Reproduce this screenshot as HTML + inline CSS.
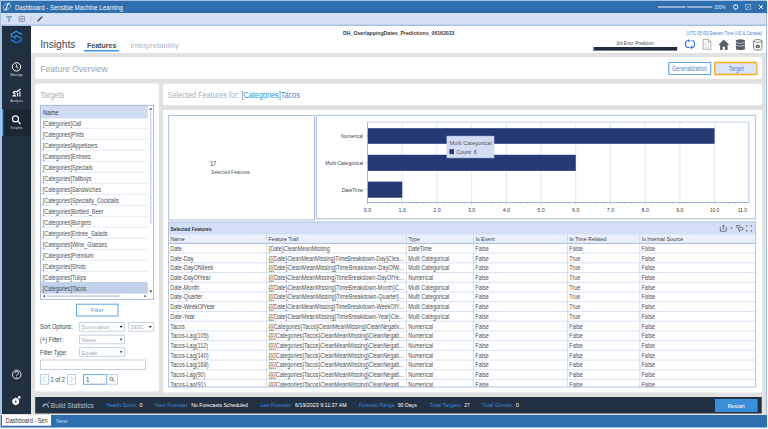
<!DOCTYPE html>
<html><head><meta charset="utf-8">
<style>
*{margin:0;padding:0}
html,body{width:768px;height:429px;overflow:hidden;background:#fff}
svg{display:block;font-family:"Liberation Sans",sans-serif}
</style></head><body>
<svg width="768" height="429" viewBox="0 0 768 429">
<rect x="0" y="0" width="768" height="429" fill="#ffffff" />
<rect x="0" y="0" width="767" height="428" fill="#a8c2e4" />
<rect x="1" y="1" width="766" height="12" fill="#2f6fb0" />
<text x="14.9" y="9.5" font-size="7.2" fill="#f4f7fb" textLength="108.00" lengthAdjust="spacingAndGlyphs">Dashboard - Sensible Machine Learning</text>
<ellipse cx="7" cy="6.7" rx="3.9" ry="3.1" stroke="#d6e2f0" stroke-width="0.55" fill="none" transform="rotate(-35 7 6.7)"/>
<path d="M9.8,3.2 C8,2.9 7.4,4.6 7.1,6.4 C6.8,8.3 6.3,10.3 4.2,10" stroke="#f4f7fb" stroke-width="1.05" fill="none"/>
<rect x="658" y="6.3" width="27.6" height="1.4" fill="#b9cde6" />
<rect x="687.2" y="6.3" width="25" height="1.4" fill="#b9cde6" />
<text x="714.2" y="9.4" font-size="5.6" fill="#e8eef8" textLength="11.10" lengthAdjust="spacingAndGlyphs">100%</text>
<rect x="733.7" y="5" width="4" height="3.9" fill="none" stroke="#eef3fa" stroke-width="0.9" rx="1"/>
<rect x="735.2" y="4" width="1" height="1" fill="#eef3fa" />
<rect x="735.2" y="8.9" width="1" height="1" fill="#eef3fa" />
<rect x="745.4" y="4.5" width="5.4" height="5.1" fill="none" stroke="#b9cbe4" stroke-width="0.6"/>
<line x1="746.6" y1="8.6" x2="749.3" y2="5.8" stroke="#d5e1f0" stroke-width="0.8"/>
<line x1="758.9" y1="4.9" x2="763" y2="9.1" stroke="#f0f4fa" stroke-width="1"/>
<line x1="763" y1="4.9" x2="758.9" y2="9.1" stroke="#f0f4fa" stroke-width="1"/>
<rect x="1" y="13" width="766" height="12" fill="#d3e0f6" />
<rect x="1" y="24.6" width="766" height="1" fill="#a8bde2" />
<rect x="6.2" y="16.3" width="5.8" height="0.9" fill="#6f7782" />
<path d="M6.8,17.6 L11.4,17.6 L9.1,20.2 Z" fill="#56aee8"/>
<rect x="8.5" y="19.6" width="1.2" height="2.2" fill="#6f7782" />
<rect x="19.2" y="16.3" width="5.3" height="5.3" fill="none" stroke="#7b828c" stroke-width="0.7" rx="0.6"/>
<line x1="21.85" y1="16.3" x2="21.85" y2="21.6" stroke="#7b828c" stroke-width="0.6"/>
<line x1="19.2" y1="18.95" x2="24.5" y2="18.95" stroke="#7b828c" stroke-width="0.6"/>
<line x1="19.6" y1="21.2" x2="24.1" y2="16.7" stroke="#9aa1aa" stroke-width="0.4"/>
<rect x="30.2" y="16.3" width="1.3" height="5.5" fill="#b7cbea" />
<line x1="37.6" y1="21.3" x2="41.8" y2="17.1" stroke="#4a525c" stroke-width="1.5"/>
<circle cx="42.2" cy="16.7" r="0.85" fill="#4aa3e6"/>
<rect x="1" y="26" width="1" height="388" fill="#a8c2e4" />
<rect x="2" y="26" width="29" height="388" fill="#213040" />
<rect x="2" y="109" width="29" height="27" fill="#1a2632" />
<rect x="2" y="109" width="1.3" height="27" fill="#4da0e6" />
<defs><linearGradient id="lg" x1="0" y1="0" x2="0" y2="1"><stop offset="0" stop-color="#22a3ee"/><stop offset="1" stop-color="#1b6fe4"/></linearGradient></defs>
<path d="M22.2,34.6 L16.2,31.3 L11.6,34 Q10.8,35.1 11.6,36.2 L16.2,38.8 M13.9,37.2 L16.2,35.6 L21,38.3 Q21.9,39.5 21,40.8 L16.2,42.9 L10.6,39.6" stroke="url(#lg)" stroke-width="1.3" fill="none" stroke-linejoin="round"/>
<circle cx="16.5" cy="66.9" r="4.2" stroke="#ffffff" stroke-width="1" fill="none"/>
<path d="M16.4,64.4 L16.4,67 L18.4,68.6" stroke="#ffffff" stroke-width="0.9" fill="none"/>
<text x="16.6" y="75.9" font-size="4.1" fill="#c9d0d8" text-anchor="middle" textLength="12.90" lengthAdjust="spacingAndGlyphs">Manage</text>
<path d="M17.6,96.6 L17.6,92.8 M19.9,96.6 L19.9,91.2 M12.8,92.8 Q14.6,90.3 16.6,91.8 L20.6,89" stroke="#ffffff" stroke-width="1.1" fill="none"/>
<path d="M12.4,96.6 Q12.4,94.4 14.3,94.4 Q16.2,94.4 16.2,96.6 Z" fill="#ffffff"/>
<circle cx="14.4" cy="93.3" r="1.1" fill="#ffffff"/>
<text x="16.6" y="102.1" font-size="4.1" fill="#c9d0d8" text-anchor="middle" textLength="12.50" lengthAdjust="spacingAndGlyphs">Analysis</text>
<circle cx="15.5" cy="118.9" r="3" stroke="#ffffff" stroke-width="1.1" fill="none"/>
<line x1="17.7" y1="121.1" x2="20.6" y2="124" stroke="#ffffff" stroke-width="1.3"/>
<text x="16.6" y="128.9" font-size="4.1" fill="#c9d0d8" text-anchor="middle" textLength="12.00" lengthAdjust="spacingAndGlyphs">Insights</text>
<circle cx="16.7" cy="374.5" r="4.3" stroke="#ffffff" stroke-width="0.85" fill="none"/>
<path d="M15.1,373.2 Q15.1,371.5 16.8,371.5 Q18.4,371.5 18.4,373 Q18.4,374.1 17.3,374.6 Q16.7,374.9 16.7,375.8" stroke="#ffffff" stroke-width="0.8" fill="none"/>
<circle cx="16.7" cy="377.2" r="0.5" fill="#ffffff"/>
<polygon points="15.7,398.1 18.6,399.8 18.6,403.2 15.7,404.9 12.8,403.2 12.8,399.8" fill="#ffffff" stroke="#ffffff" stroke-width="0.9" stroke-linejoin="round"/>
<circle cx="15.7" cy="401.5" r="0.9" fill="#213040"/>
<circle cx="19.2" cy="397.4" r="1.35" fill="#ffffff"/>
<rect x="31" y="26" width="735" height="27" fill="#ffffff" />
<text x="40.2" y="47.8" font-size="11.3" fill="#3d4654" textLength="35.20" lengthAdjust="spacingAndGlyphs">Insights</text>
<text x="86.9" y="47.5" font-size="8.1" fill="#464b53" font-weight="bold" textLength="29.60" lengthAdjust="spacingAndGlyphs">Features</text>
<rect x="84" y="50" width="35" height="1.5" fill="#3a96dd" />
<text x="130.2" y="47.8" font-size="8.1" fill="#b3b8bf" textLength="48.80" lengthAdjust="spacingAndGlyphs">Interpretability</text>
<text x="343.1" y="35.3" font-size="6.2" fill="#3c3c3c" font-weight="bold" textLength="111.40" lengthAdjust="spacingAndGlyphs">DH_OverlappingDates_Predictions_06162023</text>
<text x="686.6" y="34.6" font-size="5.6" fill="#3f7fd0" textLength="75.30" lengthAdjust="spacingAndGlyphs">[UTC-05:00] Eastern Time (US &amp; Canada)</text>
<text x="616" y="45.1" font-size="5.5" fill="#444444" textLength="37.80" lengthAdjust="spacingAndGlyphs">Job Error: Prediction</text>
<rect x="593.2" y="47" width="84" height="3.6" fill="#1f2d3d" />
<rect x="593.2" y="47" width="1.2" height="3.6" fill="#3a8fd8" />
<path d="M688.9,40.7 L687.6,40.7 Q685.7,40.7 685.7,42.6 L685.7,45.5 Q685.7,47.4 687.6,47.4 L689.4,47.4" stroke="#2a76d2" stroke-width="1.15" fill="none"/>
<path d="M691.3,40.7 L692.5,40.7 Q694.4,40.7 694.4,42.6 L694.4,45.5 Q694.4,47.4 692.5,47.4 L691.2,47.4" stroke="#2a76d2" stroke-width="1.15" fill="none"/>
<path d="M688.3,38.9 L690.3,40.7 L688.3,42.6 Z" fill="#2a76d2"/>
<path d="M692,45.6 L690,47.4 L692,49.5 Z" fill="#2a76d2"/>
<path d="M703.2,39.4 L708.6,39.4 L710.8,41.6 L710.8,49.2 L703.2,49.2 Z" stroke="#8d939a" stroke-width="0.75" fill="#ffffff"/>
<path d="M708.4,39.4 L708.4,41.8 L710.8,41.8" stroke="#8d939a" stroke-width="0.6" fill="#c9ced4"/>
<line x1="704.6" y1="42.6" x2="709.4" y2="42.6" stroke="#c2c7cd" stroke-width="0.5"/>
<line x1="704.6" y1="44.2" x2="709.4" y2="44.2" stroke="#c2c7cd" stroke-width="0.5"/>
<line x1="704.6" y1="45.8" x2="709.4" y2="45.8" stroke="#c2c7cd" stroke-width="0.5"/>
<line x1="704.6" y1="47.4" x2="709.4" y2="47.4" stroke="#c2c7cd" stroke-width="0.5"/>
<path d="M718.4,45 L723.8,39.4 L729.3,45 L727.6,45 L727.6,50 L725,50 L725,46.8 L722.6,46.8 L722.6,50 L720.1,50 L720.1,45 Z" fill="#56606a"/>
<path d="M735.9,41 Q735.9,39.3 740.45,39.3 Q745,39.3 745,41 L745,48.4 Q745,50.1 740.45,50.1 Q735.9,50.1 735.9,48.4 Z" fill="#56606a"/>
<path d="M735.9,42.6 Q740.45,44.2 745,42.6" stroke="#ffffff" stroke-width="0.55" fill="none"/>
<path d="M735.9,45.4 Q740.45,47.0 745,45.4" stroke="#ffffff" stroke-width="0.55" fill="none"/>
<path d="M753.6,41 L753.6,48.6 Q753.6,50.2 757.8,50.2 Q762,50.2 762,48.6 L762,41" stroke="#5d646c" stroke-width="0.8" fill="none"/>
<ellipse cx="757.8" cy="41" rx="4.2" ry="1.4" stroke="#5d646c" stroke-width="0.8" fill="none"/>
<ellipse cx="757.8" cy="46.4" rx="2.3" ry="1.9" fill="#5d646c"/>
<ellipse cx="757.8" cy="46.4" rx="0.9" ry="0.6" fill="#c0c5ca"/>
<rect x="31" y="53" width="735" height="361" fill="#e1e1e1" />
<rect x="766" y="13" width="1" height="402" fill="#a9bdd9" />
<rect x="767" y="0" width="1" height="429" fill="#ffffff" />
<rect x="35" y="57" width="727" height="22" fill="#ffffff" rx="2" />
<text x="40.4" y="72.1" font-size="9.4" fill="#9aa3ae" textLength="67.30" lengthAdjust="spacingAndGlyphs">Feature Overview</text>
<rect x="668.7" y="62.5" width="42" height="12" fill="#ffffff" stroke="#5aa8e6" stroke-width="1.2" rx="0.8"/>
<text x="672" y="70.8" font-size="6.6" fill="#4a84c8" textLength="35.10" lengthAdjust="spacingAndGlyphs">Generalization</text>
<rect x="714.6" y="62.5" width="42.3" height="12" fill="#dce5f5" stroke="#f2ac1e" stroke-width="1.3" rx="0.8"/>
<text x="728.5" y="70.8" font-size="6.6" fill="#4a84c8" textLength="15.20" lengthAdjust="spacingAndGlyphs">Target</text>
<rect x="35" y="83.5" width="124" height="308" fill="#ffffff" rx="2" />
<text x="40.4" y="97.5" font-size="8.4" fill="#a9b0bb" textLength="23.70" lengthAdjust="spacingAndGlyphs">Targets</text>
<rect x="40.6" y="105.4" width="113" height="193.9" fill="#ffffff" stroke="#9db4dc" stroke-width="1"/>
<rect x="41.1" y="105.9" width="106.7" height="12.6" fill="#d0dcf4" />
<text x="43" y="114.9" font-size="6.5" fill="#333a44" textLength="15.50" lengthAdjust="spacingAndGlyphs">Name</text>
<line x1="41.1" y1="128.3" x2="147.8" y2="128.3" stroke="#dde5f2" stroke-width="0.8"/>
<text x="42.8" y="126.2" font-size="6.6" fill="#4a4f57" textLength="38.50" lengthAdjust="spacingAndGlyphs">[Categories]Call</text>
<line x1="41.1" y1="139.3" x2="147.8" y2="139.3" stroke="#dde5f2" stroke-width="0.8"/>
<text x="42.8" y="137.20000000000002" font-size="6.6" fill="#4a4f57" textLength="41.21" lengthAdjust="spacingAndGlyphs">[Categories]Pints</text>
<line x1="41.1" y1="150.3" x2="147.8" y2="150.3" stroke="#dde5f2" stroke-width="0.8"/>
<text x="42.8" y="148.20000000000002" font-size="6.6" fill="#4a4f57" textLength="54.75" lengthAdjust="spacingAndGlyphs">[Categories]Appetizers</text>
<line x1="41.1" y1="161.3" x2="147.8" y2="161.3" stroke="#dde5f2" stroke-width="0.8"/>
<text x="42.8" y="159.20000000000002" font-size="6.6" fill="#4a4f57" textLength="47.83" lengthAdjust="spacingAndGlyphs">[Categories]Entrees</text>
<line x1="41.1" y1="172.3" x2="147.8" y2="172.3" stroke="#dde5f2" stroke-width="0.8"/>
<text x="42.8" y="170.20000000000002" font-size="6.6" fill="#4a4f57" textLength="49.64" lengthAdjust="spacingAndGlyphs">[Categories]Specials</text>
<line x1="41.1" y1="183.3" x2="147.8" y2="183.3" stroke="#dde5f2" stroke-width="0.8"/>
<text x="42.8" y="181.20000000000002" font-size="6.6" fill="#4a4f57" textLength="48.73" lengthAdjust="spacingAndGlyphs">[Categories]Tallboys</text>
<line x1="41.1" y1="194.3" x2="147.8" y2="194.3" stroke="#dde5f2" stroke-width="0.8"/>
<text x="42.8" y="192.20000000000002" font-size="6.6" fill="#4a4f57" textLength="58.36" lengthAdjust="spacingAndGlyphs">[Categories]Sandwiches</text>
<line x1="41.1" y1="205.3" x2="147.8" y2="205.3" stroke="#dde5f2" stroke-width="0.8"/>
<text x="42.8" y="203.20000000000002" font-size="6.6" fill="#4a4f57" textLength="76.11" lengthAdjust="spacingAndGlyphs">[Categories]Specialty_Cocktails</text>
<line x1="41.1" y1="216.3" x2="147.8" y2="216.3" stroke="#dde5f2" stroke-width="0.8"/>
<text x="42.8" y="214.20000000000002" font-size="6.6" fill="#4a4f57" textLength="60.47" lengthAdjust="spacingAndGlyphs">[Categories]Bottled_Beer</text>
<line x1="41.1" y1="227.3" x2="147.8" y2="227.3" stroke="#dde5f2" stroke-width="0.8"/>
<text x="42.8" y="225.20000000000002" font-size="6.6" fill="#4a4f57" textLength="48.13" lengthAdjust="spacingAndGlyphs">[Categories]Burgers</text>
<line x1="41.1" y1="238.3" x2="147.8" y2="238.3" stroke="#dde5f2" stroke-width="0.8"/>
<text x="42.8" y="236.20000000000002" font-size="6.6" fill="#4a4f57" textLength="64.68" lengthAdjust="spacingAndGlyphs">[Categories]Entree_Salads</text>
<line x1="41.1" y1="249.3" x2="147.8" y2="249.3" stroke="#dde5f2" stroke-width="0.8"/>
<text x="42.8" y="247.20000000000002" font-size="6.6" fill="#4a4f57" textLength="64.07" lengthAdjust="spacingAndGlyphs">[Categories]Wine_Glasses</text>
<line x1="41.1" y1="260.3" x2="147.8" y2="260.3" stroke="#dde5f2" stroke-width="0.8"/>
<text x="42.8" y="258.2" font-size="6.6" fill="#4a4f57" textLength="50.83" lengthAdjust="spacingAndGlyphs">[Categories]Premium</text>
<line x1="41.1" y1="271.3" x2="147.8" y2="271.3" stroke="#dde5f2" stroke-width="0.8"/>
<text x="42.8" y="269.2" font-size="6.6" fill="#4a4f57" textLength="43.02" lengthAdjust="spacingAndGlyphs">[Categories]Shots</text>
<line x1="41.1" y1="282.3" x2="147.8" y2="282.3" stroke="#dde5f2" stroke-width="0.8"/>
<text x="42.8" y="280.2" font-size="6.6" fill="#4a4f57" textLength="43.42" lengthAdjust="spacingAndGlyphs">[Categories]Tulips</text>
<rect x="41.1" y="282.0" width="106.7" height="12.3" fill="#c2d0ea" />
<text x="42.8" y="291.2" font-size="6.6" fill="#4a4f57" textLength="43.32" lengthAdjust="spacingAndGlyphs">[Categories]Tacos</text>
<rect x="148.5" y="106.2" width="4.6" height="187.5" fill="#ffffff" />
<rect x="150.1" y="111.1" width="1.3" height="113" fill="#c8d4ea" />
<path d="M149.7,109.6 L150.75,108.1 L151.8,109.6 Z" fill="#222" stroke="#222" stroke-width="0.4"/>
<path d="M149.7,290.8 L150.75,292.3 L151.8,290.8 Z" fill="#222" stroke="#222" stroke-width="0.4"/>
<rect x="41.4" y="293.7" width="107" height="5" fill="#ffffff" />
<rect x="46.4" y="295.3" width="73.4" height="1.7" fill="#c5d2ea" />
<path d="M44.8,294.8 L43.2,296.2 L44.8,297.6 Z" fill="#222"/>
<path d="M144.6,294.8 L146.2,296.2 L144.6,297.6 Z" fill="#222"/>
<rect x="76.5" y="304.2" width="41.5" height="11.8" fill="#ffffff" stroke="#5aa8e6" stroke-width="1"/>
<text x="97.2" y="312.4" font-size="6.2" fill="#5b92d6" text-anchor="middle" textLength="12.80" lengthAdjust="spacingAndGlyphs">Filter</text>
<text x="40.1" y="329.4" font-size="6.4" fill="#3a3f47" textLength="32.60" lengthAdjust="spacingAndGlyphs">Sort Options:</text>
<text x="40.1" y="341.9" font-size="6.4" fill="#3a3f47" textLength="22.80" lengthAdjust="spacingAndGlyphs">(+) Filter:</text>
<text x="40.1" y="354.7" font-size="6.4" fill="#3a3f47" textLength="27.00" lengthAdjust="spacingAndGlyphs">Filter Type:</text>
<rect x="79.6" y="322.6" width="44.8" height="8.6" fill="#ffffff" stroke="#b9c8e4" stroke-width="0.8"/>
<text x="81.6" y="329.40000000000003" font-size="5.8" fill="#a3aab3" textLength="28.20" lengthAdjust="spacingAndGlyphs">Summation</text>
<path d="M119.6,326.1 L122.6,326.1 L121.1,327.90000000000003 Z" fill="#222"/>
<rect x="128.8" y="322.6" width="24.8" height="8.6" fill="#ffffff" stroke="#b9c8e4" stroke-width="0.8"/>
<text x="130.8" y="329.40000000000003" font-size="5.8" fill="#a3aab3" textLength="13.00" lengthAdjust="spacingAndGlyphs">DESC</text>
<path d="M148.8,326.1 L151.8,326.1 L150.3,327.90000000000003 Z" fill="#222"/>
<rect x="79.6" y="335.2" width="44.8" height="8.6" fill="#ffffff" stroke="#b9c8e4" stroke-width="0.8"/>
<text x="81.6" y="342.0" font-size="5.8" fill="#a3aab3" textLength="14.50" lengthAdjust="spacingAndGlyphs">Name</text>
<path d="M119.6,338.7 L122.6,338.7 L121.1,340.5 Z" fill="#222"/>
<rect x="79.6" y="347.7" width="44.8" height="8.6" fill="#ffffff" stroke="#b9c8e4" stroke-width="0.8"/>
<text x="81.6" y="354.5" font-size="5.8" fill="#a3aab3" textLength="15.80" lengthAdjust="spacingAndGlyphs">Equals</text>
<path d="M119.6,351.2 L122.6,351.2 L121.1,353.0 Z" fill="#222"/>
<rect x="40.4" y="360" width="105" height="9.4" fill="#ffffff" stroke="#b9c2d0" stroke-width="0.8"/>
<rect x="40.4" y="374.6" width="8.2" height="9.6" fill="#ffffff" stroke="#a9c6ea" stroke-width="0.8"/>
<path d="M45.6,376.6 L43.2,379.4 L45.6,382.2" stroke="#8cb4e2" stroke-width="0.7" fill="none"/>
<text x="50.5" y="382" font-size="6.3" fill="#3a3f47" textLength="14.40" lengthAdjust="spacingAndGlyphs">1 of 2</text>
<rect x="67.5" y="374.6" width="8" height="9.6" fill="#ffffff" stroke="#a9c6ea" stroke-width="0.8"/>
<path d="M70.3,376.6 L72.7,379.4 L70.3,382.2" stroke="#8cb4e2" stroke-width="0.7" fill="none"/>
<rect x="83.5" y="374.6" width="23" height="9.6" fill="#ffffff" stroke="#5d9ee0" stroke-width="0.9"/>
<text x="86" y="382" font-size="6.3" fill="#3a3f47">1</text>
<rect x="106.8" y="374.6" width="10.6" height="9.6" fill="#ffffff" stroke="#a9c6ea" stroke-width="0.8"/>
<circle cx="111.5" cy="378.9" r="1.6" stroke="#555" stroke-width="0.7" fill="none"/><line x1="112.6" y1="380" x2="114.2" y2="381.6" stroke="#555" stroke-width="0.9"/>
<rect x="163" y="83.7" width="599" height="21.5" fill="#ffffff" rx="2" />
<text x="167.6" y="97.5" font-size="8.4" fill="#a9b0bb" textLength="71.90" lengthAdjust="spacingAndGlyphs">Selected Features for: </text>
<text x="241.5" y="97.5" font-size="8.4" fill="#3b8ad8" textLength="58.30" lengthAdjust="spacingAndGlyphs">[Categories]Tacos</text>
<rect x="163" y="109.8" width="599" height="282.8" fill="#ffffff" rx="2" />
<rect x="168.7" y="115.5" width="145.8" height="104.5" fill="none" stroke="#a9bde3" stroke-width="1"/>
<text x="210.2" y="165.9" font-size="6.8" fill="#333333" textLength="5.90" lengthAdjust="spacingAndGlyphs">17</text>
<text x="211.2" y="173.7" font-size="5.4" fill="#555b63" textLength="38.80" lengthAdjust="spacingAndGlyphs">Selected Features</text>
<rect x="316.4" y="115.3" width="439.3" height="103.4" fill="none" stroke="#a9bde3" stroke-width="1"/>
<rect x="367.5" y="122.1" width="381.20000000000005" height="80.5" fill="none" stroke="#b8c8e6" stroke-width="0.8"/>
<line x1="402.21" y1="122.1" x2="402.21" y2="202.6" stroke="#d5dff0" stroke-width="0.7"/>
<line x1="436.92" y1="122.1" x2="436.92" y2="202.6" stroke="#d5dff0" stroke-width="0.7"/>
<line x1="471.63" y1="122.1" x2="471.63" y2="202.6" stroke="#d5dff0" stroke-width="0.7"/>
<line x1="506.34000000000003" y1="122.1" x2="506.34000000000003" y2="202.6" stroke="#d5dff0" stroke-width="0.7"/>
<line x1="541.05" y1="122.1" x2="541.05" y2="202.6" stroke="#d5dff0" stroke-width="0.7"/>
<line x1="575.76" y1="122.1" x2="575.76" y2="202.6" stroke="#d5dff0" stroke-width="0.7"/>
<line x1="610.47" y1="122.1" x2="610.47" y2="202.6" stroke="#d5dff0" stroke-width="0.7"/>
<line x1="645.1800000000001" y1="122.1" x2="645.1800000000001" y2="202.6" stroke="#d5dff0" stroke-width="0.7"/>
<line x1="679.89" y1="122.1" x2="679.89" y2="202.6" stroke="#d5dff0" stroke-width="0.7"/>
<line x1="714.6" y1="122.1" x2="714.6" y2="202.6" stroke="#d5dff0" stroke-width="0.7"/>
<line x1="749.31" y1="122.1" x2="749.31" y2="202.6" stroke="#d5dff0" stroke-width="0.7"/>
<rect x="367.5" y="128.2" width="347.1" height="15.600000000000023" fill="#253a74" />
<rect x="367.5" y="154.8" width="208.26" height="16.099999999999994" fill="#253a74" />
<rect x="367.5" y="181.6" width="34.71" height="16.099999999999994" fill="#253a74" />
<line x1="367.5" y1="122.1" x2="367.5" y2="202.6" stroke="#9fb3da" stroke-width="0.9"/>
<line x1="367.5" y1="202.6" x2="748.7" y2="202.6" stroke="#9fb3da" stroke-width="0.9"/>
<line x1="367.5" y1="202.6" x2="367.5" y2="204.2" stroke="#8a9cc2" stroke-width="0.6"/>
<line x1="374.442" y1="202.6" x2="374.442" y2="203.6" stroke="#8a9cc2" stroke-width="0.6"/>
<line x1="381.384" y1="202.6" x2="381.384" y2="203.6" stroke="#8a9cc2" stroke-width="0.6"/>
<line x1="388.326" y1="202.6" x2="388.326" y2="203.6" stroke="#8a9cc2" stroke-width="0.6"/>
<line x1="395.26800000000003" y1="202.6" x2="395.26800000000003" y2="203.6" stroke="#8a9cc2" stroke-width="0.6"/>
<line x1="402.21" y1="202.6" x2="402.21" y2="204.2" stroke="#8a9cc2" stroke-width="0.6"/>
<line x1="409.152" y1="202.6" x2="409.152" y2="203.6" stroke="#8a9cc2" stroke-width="0.6"/>
<line x1="416.094" y1="202.6" x2="416.094" y2="203.6" stroke="#8a9cc2" stroke-width="0.6"/>
<line x1="423.036" y1="202.6" x2="423.036" y2="203.6" stroke="#8a9cc2" stroke-width="0.6"/>
<line x1="429.97799999999995" y1="202.6" x2="429.97799999999995" y2="203.6" stroke="#8a9cc2" stroke-width="0.6"/>
<line x1="436.92" y1="202.6" x2="436.92" y2="204.2" stroke="#8a9cc2" stroke-width="0.6"/>
<line x1="443.862" y1="202.6" x2="443.862" y2="203.6" stroke="#8a9cc2" stroke-width="0.6"/>
<line x1="450.80400000000003" y1="202.6" x2="450.80400000000003" y2="203.6" stroke="#8a9cc2" stroke-width="0.6"/>
<line x1="457.74600000000004" y1="202.6" x2="457.74600000000004" y2="203.6" stroke="#8a9cc2" stroke-width="0.6"/>
<line x1="464.688" y1="202.6" x2="464.688" y2="203.6" stroke="#8a9cc2" stroke-width="0.6"/>
<line x1="471.63" y1="202.6" x2="471.63" y2="204.2" stroke="#8a9cc2" stroke-width="0.6"/>
<line x1="478.572" y1="202.6" x2="478.572" y2="203.6" stroke="#8a9cc2" stroke-width="0.6"/>
<line x1="485.514" y1="202.6" x2="485.514" y2="203.6" stroke="#8a9cc2" stroke-width="0.6"/>
<line x1="492.456" y1="202.6" x2="492.456" y2="203.6" stroke="#8a9cc2" stroke-width="0.6"/>
<line x1="499.398" y1="202.6" x2="499.398" y2="203.6" stroke="#8a9cc2" stroke-width="0.6"/>
<line x1="506.34000000000003" y1="202.6" x2="506.34000000000003" y2="204.2" stroke="#8a9cc2" stroke-width="0.6"/>
<line x1="513.282" y1="202.6" x2="513.282" y2="203.6" stroke="#8a9cc2" stroke-width="0.6"/>
<line x1="520.224" y1="202.6" x2="520.224" y2="203.6" stroke="#8a9cc2" stroke-width="0.6"/>
<line x1="527.166" y1="202.6" x2="527.166" y2="203.6" stroke="#8a9cc2" stroke-width="0.6"/>
<line x1="534.1080000000001" y1="202.6" x2="534.1080000000001" y2="203.6" stroke="#8a9cc2" stroke-width="0.6"/>
<line x1="541.05" y1="202.6" x2="541.05" y2="204.2" stroke="#8a9cc2" stroke-width="0.6"/>
<line x1="547.992" y1="202.6" x2="547.992" y2="203.6" stroke="#8a9cc2" stroke-width="0.6"/>
<line x1="554.934" y1="202.6" x2="554.934" y2="203.6" stroke="#8a9cc2" stroke-width="0.6"/>
<line x1="561.876" y1="202.6" x2="561.876" y2="203.6" stroke="#8a9cc2" stroke-width="0.6"/>
<line x1="568.818" y1="202.6" x2="568.818" y2="203.6" stroke="#8a9cc2" stroke-width="0.6"/>
<line x1="575.76" y1="202.6" x2="575.76" y2="204.2" stroke="#8a9cc2" stroke-width="0.6"/>
<line x1="582.702" y1="202.6" x2="582.702" y2="203.6" stroke="#8a9cc2" stroke-width="0.6"/>
<line x1="589.644" y1="202.6" x2="589.644" y2="203.6" stroke="#8a9cc2" stroke-width="0.6"/>
<line x1="596.586" y1="202.6" x2="596.586" y2="203.6" stroke="#8a9cc2" stroke-width="0.6"/>
<line x1="603.528" y1="202.6" x2="603.528" y2="203.6" stroke="#8a9cc2" stroke-width="0.6"/>
<line x1="610.47" y1="202.6" x2="610.47" y2="204.2" stroke="#8a9cc2" stroke-width="0.6"/>
<line x1="617.412" y1="202.6" x2="617.412" y2="203.6" stroke="#8a9cc2" stroke-width="0.6"/>
<line x1="624.354" y1="202.6" x2="624.354" y2="203.6" stroke="#8a9cc2" stroke-width="0.6"/>
<line x1="631.296" y1="202.6" x2="631.296" y2="203.6" stroke="#8a9cc2" stroke-width="0.6"/>
<line x1="638.238" y1="202.6" x2="638.238" y2="203.6" stroke="#8a9cc2" stroke-width="0.6"/>
<line x1="645.1800000000001" y1="202.6" x2="645.1800000000001" y2="204.2" stroke="#8a9cc2" stroke-width="0.6"/>
<line x1="652.1220000000001" y1="202.6" x2="652.1220000000001" y2="203.6" stroke="#8a9cc2" stroke-width="0.6"/>
<line x1="659.0640000000001" y1="202.6" x2="659.0640000000001" y2="203.6" stroke="#8a9cc2" stroke-width="0.6"/>
<line x1="666.0060000000001" y1="202.6" x2="666.0060000000001" y2="203.6" stroke="#8a9cc2" stroke-width="0.6"/>
<line x1="672.9480000000001" y1="202.6" x2="672.9480000000001" y2="203.6" stroke="#8a9cc2" stroke-width="0.6"/>
<line x1="679.89" y1="202.6" x2="679.89" y2="204.2" stroke="#8a9cc2" stroke-width="0.6"/>
<line x1="686.832" y1="202.6" x2="686.832" y2="203.6" stroke="#8a9cc2" stroke-width="0.6"/>
<line x1="693.774" y1="202.6" x2="693.774" y2="203.6" stroke="#8a9cc2" stroke-width="0.6"/>
<line x1="700.716" y1="202.6" x2="700.716" y2="203.6" stroke="#8a9cc2" stroke-width="0.6"/>
<line x1="707.658" y1="202.6" x2="707.658" y2="203.6" stroke="#8a9cc2" stroke-width="0.6"/>
<line x1="714.6" y1="202.6" x2="714.6" y2="204.2" stroke="#8a9cc2" stroke-width="0.6"/>
<line x1="721.542" y1="202.6" x2="721.542" y2="203.6" stroke="#8a9cc2" stroke-width="0.6"/>
<line x1="728.484" y1="202.6" x2="728.484" y2="203.6" stroke="#8a9cc2" stroke-width="0.6"/>
<line x1="735.426" y1="202.6" x2="735.426" y2="203.6" stroke="#8a9cc2" stroke-width="0.6"/>
<line x1="742.368" y1="202.6" x2="742.368" y2="203.6" stroke="#8a9cc2" stroke-width="0.6"/>
<line x1="365.5" y1="136" x2="367.5" y2="136" stroke="#7f93bb" stroke-width="0.6"/>
<text x="363.1" y="137.9" font-size="5.6" fill="#3a3f47" text-anchor="end" textLength="22.20" lengthAdjust="spacingAndGlyphs">Numerical</text>
<line x1="365.5" y1="162.8" x2="367.5" y2="162.8" stroke="#7f93bb" stroke-width="0.6"/>
<text x="363.1" y="164.70000000000002" font-size="5.6" fill="#3a3f47" text-anchor="end" textLength="37.80" lengthAdjust="spacingAndGlyphs">Multi Categorical</text>
<line x1="365.5" y1="189.6" x2="367.5" y2="189.6" stroke="#7f93bb" stroke-width="0.6"/>
<text x="363.1" y="191.5" font-size="5.6" fill="#3a3f47" text-anchor="end" textLength="21.40" lengthAdjust="spacingAndGlyphs">DateTime</text>
<text x="367.5" y="211.5" font-size="5.6" fill="#3a3f47" text-anchor="middle" textLength="7.40" lengthAdjust="spacingAndGlyphs">0.0</text>
<text x="402.21" y="211.5" font-size="5.6" fill="#3a3f47" text-anchor="middle" textLength="7.40" lengthAdjust="spacingAndGlyphs">1.0</text>
<text x="436.92" y="211.5" font-size="5.6" fill="#3a3f47" text-anchor="middle" textLength="7.40" lengthAdjust="spacingAndGlyphs">2.0</text>
<text x="471.63" y="211.5" font-size="5.6" fill="#3a3f47" text-anchor="middle" textLength="7.40" lengthAdjust="spacingAndGlyphs">3.0</text>
<text x="506.34000000000003" y="211.5" font-size="5.6" fill="#3a3f47" text-anchor="middle" textLength="7.40" lengthAdjust="spacingAndGlyphs">4.0</text>
<text x="541.05" y="211.5" font-size="5.6" fill="#3a3f47" text-anchor="middle" textLength="7.40" lengthAdjust="spacingAndGlyphs">5.0</text>
<text x="575.76" y="211.5" font-size="5.6" fill="#3a3f47" text-anchor="middle" textLength="7.40" lengthAdjust="spacingAndGlyphs">6.0</text>
<text x="610.47" y="211.5" font-size="5.6" fill="#3a3f47" text-anchor="middle" textLength="7.40" lengthAdjust="spacingAndGlyphs">7.0</text>
<text x="645.1800000000001" y="211.5" font-size="5.6" fill="#3a3f47" text-anchor="middle" textLength="7.40" lengthAdjust="spacingAndGlyphs">8.0</text>
<text x="679.89" y="211.5" font-size="5.6" fill="#3a3f47" text-anchor="middle" textLength="7.40" lengthAdjust="spacingAndGlyphs">9.0</text>
<text x="714.6" y="211.5" font-size="5.6" fill="#3a3f47" text-anchor="middle" textLength="9.30" lengthAdjust="spacingAndGlyphs">10.0</text>
<text x="742.3" y="211.5" font-size="5.6" fill="#3a3f47" text-anchor="middle" textLength="9.30" lengthAdjust="spacingAndGlyphs">11.0</text>
<rect x="446.9" y="136.1" width="47.1" height="21.8" fill="#d3def5" />
<rect x="446.9" y="136.1" width="47.1" height="21.8" fill="none" stroke="#c2d0ea" stroke-width="0.5"/>
<text x="449.6" y="144.9" font-size="6.2" fill="#50555c" textLength="42.20" lengthAdjust="spacingAndGlyphs">Multi Categorical</text>
<rect x="449.4" y="149.2" width="4.6" height="4.9" fill="#253a74" />
<text x="456.2" y="153.8" font-size="5.6" fill="#3a3f47" textLength="20.70" lengthAdjust="spacingAndGlyphs">Count: 6</text>
<rect x="168.5" y="222" width="587.2" height="11.8" fill="#d3dff6" />
<text x="170.6" y="230.6" font-size="5.7" fill="#2a2f36" font-weight="bold" textLength="41.00" lengthAdjust="spacingAndGlyphs">Selected Features</text>
<path d="M720.3,227 L720.3,231.2 L726.3,231.2 L726.3,227 M723.3,229.8 L723.3,225.2 M722,226.4 L723.3,225.2 L724.6,226.4" stroke="#5a5f66" stroke-width="0.8" fill="none"/>
<path d="M730.4,227.6 L732.8,227.6 L731.6,229 Z" fill="#5a5f66"/>
<path d="M736,225.6 L740.5,225.6 M736,227.2 L738,227.2 M738.6,227.4 L742.8,227.4 L742.8,229.8 L740.6,229.8 L739.4,231.6 L739.4,229.8 L738.6,229.8 Z" stroke="#5a5f66" stroke-width="0.75" fill="none"/>
<rect x="746.0" y="225.3" width="1.3" height="1.3" fill="#5a5f66" />
<rect x="750.8" y="225.3" width="1.3" height="1.3" fill="#5a5f66" />
<rect x="746.0" y="230.1" width="1.3" height="1.3" fill="#5a5f66" />
<rect x="750.8" y="230.1" width="1.3" height="1.3" fill="#5a5f66" />
<rect x="168.5" y="233.8" width="587.2" height="9.6" fill="#e9effb" />
<text x="170.5" y="240.8" font-size="5.9" fill="#3f444b" textLength="14.16" lengthAdjust="spacingAndGlyphs">Name</text>
<text x="268.6" y="240.8" font-size="5.9" fill="#3f444b" textLength="29.81" lengthAdjust="spacingAndGlyphs">Feature Trail</text>
<text x="408.4" y="240.8" font-size="5.9" fill="#3f444b" textLength="11.51" lengthAdjust="spacingAndGlyphs">Type</text>
<text x="475.5" y="240.8" font-size="5.9" fill="#3f444b" textLength="19.18" lengthAdjust="spacingAndGlyphs">Is Event</text>
<text x="569.5" y="240.8" font-size="5.9" fill="#3f444b" textLength="36.89" lengthAdjust="spacingAndGlyphs">Is Time Related</text>
<text x="641.7" y="240.8" font-size="5.9" fill="#3f444b" textLength="41.62" lengthAdjust="spacingAndGlyphs">Is Internal Source</text>
<clipPath id="gc"><rect x="168.5" y="243.4" width="587.2" height="143.6"/></clipPath>
<g clip-path="url(#gc)">
<line x1="168.5" y1="253.12" x2="755.7" y2="253.12" stroke="#d0daef" stroke-width="0.8"/>
<text x="170.3" y="250.8" font-size="6.4" fill="#4a4f57" textLength="11.63" lengthAdjust="spacingAndGlyphs">Date</text>
<text x="268.40000000000003" y="250.8" font-size="6.4" fill="#4a4f57" textLength="61.50" lengthAdjust="spacingAndGlyphs">{Date}CleanMeanMissing</text>
<text x="408.2" y="250.8" font-size="6.4" fill="#4a4f57" textLength="23.65" lengthAdjust="spacingAndGlyphs">DateTime</text>
<text x="475.3" y="250.8" font-size="6.4" fill="#4a4f57" textLength="13.46" lengthAdjust="spacingAndGlyphs">False</text>
<text x="569.3" y="250.8" font-size="6.4" fill="#4a4f57" textLength="13.46" lengthAdjust="spacingAndGlyphs">False</text>
<text x="641.5" y="250.8" font-size="6.4" fill="#4a4f57" textLength="13.46" lengthAdjust="spacingAndGlyphs">False</text>
<line x1="168.5" y1="262.84000000000003" x2="755.7" y2="262.84000000000003" stroke="#d0daef" stroke-width="0.8"/>
<text x="170.3" y="260.52" font-size="6.4" fill="#4a4f57" textLength="23.25" lengthAdjust="spacingAndGlyphs">Date-Day</text>
<text x="268.40000000000003" y="260.52" font-size="6.4" fill="#4a4f57" textLength="135.20" lengthAdjust="spacingAndGlyphs">{{{Date}CleanMeanMissing}TimeBreakdown-Day}Clea...</text>
<text x="408.2" y="260.52" font-size="6.4" fill="#4a4f57" textLength="40.99" lengthAdjust="spacingAndGlyphs">Multi Categorical</text>
<text x="475.3" y="260.52" font-size="6.4" fill="#4a4f57" textLength="13.46" lengthAdjust="spacingAndGlyphs">False</text>
<text x="569.3" y="260.52" font-size="6.4" fill="#4a4f57" textLength="11.11" lengthAdjust="spacingAndGlyphs">True</text>
<text x="641.5" y="260.52" font-size="6.4" fill="#4a4f57" textLength="13.46" lengthAdjust="spacingAndGlyphs">False</text>
<line x1="168.5" y1="272.56000000000006" x2="755.7" y2="272.56000000000006" stroke="#d0daef" stroke-width="0.8"/>
<text x="170.3" y="270.24" font-size="6.4" fill="#4a4f57" textLength="43.03" lengthAdjust="spacingAndGlyphs">Date-DayOfWeek</text>
<text x="268.40000000000003" y="270.24" font-size="6.4" fill="#4a4f57" textLength="135.20" lengthAdjust="spacingAndGlyphs">{{{Date}CleanMeanMissing}TimeBreakdown-DayOfW...</text>
<text x="408.2" y="270.24" font-size="6.4" fill="#4a4f57" textLength="40.99" lengthAdjust="spacingAndGlyphs">Multi Categorical</text>
<text x="475.3" y="270.24" font-size="6.4" fill="#4a4f57" textLength="13.46" lengthAdjust="spacingAndGlyphs">False</text>
<text x="569.3" y="270.24" font-size="6.4" fill="#4a4f57" textLength="11.11" lengthAdjust="spacingAndGlyphs">True</text>
<text x="641.5" y="270.24" font-size="6.4" fill="#4a4f57" textLength="13.46" lengthAdjust="spacingAndGlyphs">False</text>
<line x1="168.5" y1="282.28000000000003" x2="755.7" y2="282.28000000000003" stroke="#d0daef" stroke-width="0.8"/>
<text x="170.3" y="279.96" font-size="6.4" fill="#4a4f57" textLength="40.18" lengthAdjust="spacingAndGlyphs">Date-DayOfYear</text>
<text x="268.40000000000003" y="279.96" font-size="6.4" fill="#4a4f57" textLength="135.20" lengthAdjust="spacingAndGlyphs">{{{Date}CleanMeanMissing}TimeBreakdown-DayOfYe...</text>
<text x="408.2" y="279.96" font-size="6.4" fill="#4a4f57" textLength="24.77" lengthAdjust="spacingAndGlyphs">Numerical</text>
<text x="475.3" y="279.96" font-size="6.4" fill="#4a4f57" textLength="13.46" lengthAdjust="spacingAndGlyphs">False</text>
<text x="569.3" y="279.96" font-size="6.4" fill="#4a4f57" textLength="11.11" lengthAdjust="spacingAndGlyphs">True</text>
<text x="641.5" y="279.96" font-size="6.4" fill="#4a4f57" textLength="13.46" lengthAdjust="spacingAndGlyphs">False</text>
<line x1="168.5" y1="292.00000000000006" x2="755.7" y2="292.00000000000006" stroke="#d0daef" stroke-width="0.8"/>
<text x="170.3" y="289.68" font-size="6.4" fill="#4a4f57" textLength="28.76" lengthAdjust="spacingAndGlyphs">Date-Month</text>
<text x="268.40000000000003" y="289.68" font-size="6.4" fill="#4a4f57" textLength="135.20" lengthAdjust="spacingAndGlyphs">{{{Date}CleanMeanMissing}TimeBreakdown-Month}C...</text>
<text x="408.2" y="289.68" font-size="6.4" fill="#4a4f57" textLength="40.99" lengthAdjust="spacingAndGlyphs">Multi Categorical</text>
<text x="475.3" y="289.68" font-size="6.4" fill="#4a4f57" textLength="13.46" lengthAdjust="spacingAndGlyphs">False</text>
<text x="569.3" y="289.68" font-size="6.4" fill="#4a4f57" textLength="11.11" lengthAdjust="spacingAndGlyphs">True</text>
<text x="641.5" y="289.68" font-size="6.4" fill="#4a4f57" textLength="13.46" lengthAdjust="spacingAndGlyphs">False</text>
<line x1="168.5" y1="301.72" x2="755.7" y2="301.72" stroke="#d0daef" stroke-width="0.8"/>
<text x="170.3" y="299.4" font-size="6.4" fill="#4a4f57" textLength="32.12" lengthAdjust="spacingAndGlyphs">Date-Quarter</text>
<text x="268.40000000000003" y="299.4" font-size="6.4" fill="#4a4f57" textLength="135.20" lengthAdjust="spacingAndGlyphs">{{{Date}CleanMeanMissing}TimeBreakdown-Quarter}...</text>
<text x="408.2" y="299.4" font-size="6.4" fill="#4a4f57" textLength="40.99" lengthAdjust="spacingAndGlyphs">Multi Categorical</text>
<text x="475.3" y="299.4" font-size="6.4" fill="#4a4f57" textLength="13.46" lengthAdjust="spacingAndGlyphs">False</text>
<text x="569.3" y="299.4" font-size="6.4" fill="#4a4f57" textLength="11.11" lengthAdjust="spacingAndGlyphs">True</text>
<text x="641.5" y="299.4" font-size="6.4" fill="#4a4f57" textLength="13.46" lengthAdjust="spacingAndGlyphs">False</text>
<line x1="168.5" y1="311.44000000000005" x2="755.7" y2="311.44000000000005" stroke="#d0daef" stroke-width="0.8"/>
<text x="170.3" y="309.12" font-size="6.4" fill="#4a4f57" textLength="44.36" lengthAdjust="spacingAndGlyphs">Date-WeekOfYear</text>
<text x="268.40000000000003" y="309.12" font-size="6.4" fill="#4a4f57" textLength="135.20" lengthAdjust="spacingAndGlyphs">{{{Date}CleanMeanMissing}TimeBreakdown-WeekOfY...</text>
<text x="408.2" y="309.12" font-size="6.4" fill="#4a4f57" textLength="40.99" lengthAdjust="spacingAndGlyphs">Multi Categorical</text>
<text x="475.3" y="309.12" font-size="6.4" fill="#4a4f57" textLength="13.46" lengthAdjust="spacingAndGlyphs">False</text>
<text x="569.3" y="309.12" font-size="6.4" fill="#4a4f57" textLength="11.11" lengthAdjust="spacingAndGlyphs">True</text>
<text x="641.5" y="309.12" font-size="6.4" fill="#4a4f57" textLength="13.46" lengthAdjust="spacingAndGlyphs">False</text>
<line x1="168.5" y1="321.16" x2="755.7" y2="321.16" stroke="#d0daef" stroke-width="0.8"/>
<text x="170.3" y="318.84" font-size="6.4" fill="#4a4f57" textLength="24.58" lengthAdjust="spacingAndGlyphs">Date-Year</text>
<text x="268.40000000000003" y="318.84" font-size="6.4" fill="#4a4f57" textLength="135.20" lengthAdjust="spacingAndGlyphs">{{{Date}CleanMeanMissing}TimeBreakdown-Year}Cle...</text>
<text x="408.2" y="318.84" font-size="6.4" fill="#4a4f57" textLength="40.99" lengthAdjust="spacingAndGlyphs">Multi Categorical</text>
<text x="475.3" y="318.84" font-size="6.4" fill="#4a4f57" textLength="13.46" lengthAdjust="spacingAndGlyphs">False</text>
<text x="569.3" y="318.84" font-size="6.4" fill="#4a4f57" textLength="11.11" lengthAdjust="spacingAndGlyphs">True</text>
<text x="641.5" y="318.84" font-size="6.4" fill="#4a4f57" textLength="13.46" lengthAdjust="spacingAndGlyphs">False</text>
<line x1="168.5" y1="330.88000000000005" x2="755.7" y2="330.88000000000005" stroke="#d0daef" stroke-width="0.8"/>
<text x="170.3" y="328.56" font-size="6.4" fill="#4a4f57" textLength="14.38" lengthAdjust="spacingAndGlyphs">Tacos</text>
<text x="268.40000000000003" y="328.56" font-size="6.4" fill="#4a4f57" textLength="135.20" lengthAdjust="spacingAndGlyphs">{{{Categories}Tacos}CleanMeanMissing}CleanNegativ...</text>
<text x="408.2" y="328.56" font-size="6.4" fill="#4a4f57" textLength="24.77" lengthAdjust="spacingAndGlyphs">Numerical</text>
<text x="475.3" y="328.56" font-size="6.4" fill="#4a4f57" textLength="13.46" lengthAdjust="spacingAndGlyphs">False</text>
<text x="569.3" y="328.56" font-size="6.4" fill="#4a4f57" textLength="13.46" lengthAdjust="spacingAndGlyphs">False</text>
<text x="641.5" y="328.56" font-size="6.4" fill="#4a4f57" textLength="13.46" lengthAdjust="spacingAndGlyphs">False</text>
<line x1="168.5" y1="340.6" x2="755.7" y2="340.6" stroke="#d0daef" stroke-width="0.8"/>
<text x="170.3" y="338.28" font-size="6.4" fill="#4a4f57" textLength="38.24" lengthAdjust="spacingAndGlyphs">Tacos-Lag(105)</text>
<text x="268.40000000000003" y="338.28" font-size="6.4" fill="#4a4f57" textLength="135.20" lengthAdjust="spacingAndGlyphs">{{{{Categories}Tacos}CleanMeanMissing}CleanNegati...</text>
<text x="408.2" y="338.28" font-size="6.4" fill="#4a4f57" textLength="24.77" lengthAdjust="spacingAndGlyphs">Numerical</text>
<text x="475.3" y="338.28" font-size="6.4" fill="#4a4f57" textLength="13.46" lengthAdjust="spacingAndGlyphs">False</text>
<text x="569.3" y="338.28" font-size="6.4" fill="#4a4f57" textLength="13.46" lengthAdjust="spacingAndGlyphs">False</text>
<text x="641.5" y="338.28" font-size="6.4" fill="#4a4f57" textLength="13.46" lengthAdjust="spacingAndGlyphs">False</text>
<line x1="168.5" y1="350.32000000000005" x2="755.7" y2="350.32000000000005" stroke="#d0daef" stroke-width="0.8"/>
<text x="170.3" y="348.0" font-size="6.4" fill="#4a4f57" textLength="37.84" lengthAdjust="spacingAndGlyphs">Tacos-Lag(112)</text>
<text x="268.40000000000003" y="348.0" font-size="6.4" fill="#4a4f57" textLength="135.20" lengthAdjust="spacingAndGlyphs">{{{{Categories}Tacos}CleanMeanMissing}CleanNegati...</text>
<text x="408.2" y="348.0" font-size="6.4" fill="#4a4f57" textLength="24.77" lengthAdjust="spacingAndGlyphs">Numerical</text>
<text x="475.3" y="348.0" font-size="6.4" fill="#4a4f57" textLength="13.46" lengthAdjust="spacingAndGlyphs">False</text>
<text x="569.3" y="348.0" font-size="6.4" fill="#4a4f57" textLength="13.46" lengthAdjust="spacingAndGlyphs">False</text>
<text x="641.5" y="348.0" font-size="6.4" fill="#4a4f57" textLength="13.46" lengthAdjust="spacingAndGlyphs">False</text>
<line x1="168.5" y1="360.04" x2="755.7" y2="360.04" stroke="#d0daef" stroke-width="0.8"/>
<text x="170.3" y="357.71999999999997" font-size="6.4" fill="#4a4f57" textLength="38.24" lengthAdjust="spacingAndGlyphs">Tacos-Lag(140)</text>
<text x="268.40000000000003" y="357.71999999999997" font-size="6.4" fill="#4a4f57" textLength="135.20" lengthAdjust="spacingAndGlyphs">{{{{Categories}Tacos}CleanMeanMissing}CleanNegati...</text>
<text x="408.2" y="357.71999999999997" font-size="6.4" fill="#4a4f57" textLength="24.77" lengthAdjust="spacingAndGlyphs">Numerical</text>
<text x="475.3" y="357.71999999999997" font-size="6.4" fill="#4a4f57" textLength="13.46" lengthAdjust="spacingAndGlyphs">False</text>
<text x="569.3" y="357.71999999999997" font-size="6.4" fill="#4a4f57" textLength="13.46" lengthAdjust="spacingAndGlyphs">False</text>
<text x="641.5" y="357.71999999999997" font-size="6.4" fill="#4a4f57" textLength="13.46" lengthAdjust="spacingAndGlyphs">False</text>
<line x1="168.5" y1="369.76000000000005" x2="755.7" y2="369.76000000000005" stroke="#d0daef" stroke-width="0.8"/>
<text x="170.3" y="367.44" font-size="6.4" fill="#4a4f57" textLength="38.24" lengthAdjust="spacingAndGlyphs">Tacos-Lag(168)</text>
<text x="268.40000000000003" y="367.44" font-size="6.4" fill="#4a4f57" textLength="135.20" lengthAdjust="spacingAndGlyphs">{{{{Categories}Tacos}CleanMeanMissing}CleanNegati...</text>
<text x="408.2" y="367.44" font-size="6.4" fill="#4a4f57" textLength="24.77" lengthAdjust="spacingAndGlyphs">Numerical</text>
<text x="475.3" y="367.44" font-size="6.4" fill="#4a4f57" textLength="13.46" lengthAdjust="spacingAndGlyphs">False</text>
<text x="569.3" y="367.44" font-size="6.4" fill="#4a4f57" textLength="13.46" lengthAdjust="spacingAndGlyphs">False</text>
<text x="641.5" y="367.44" font-size="6.4" fill="#4a4f57" textLength="13.46" lengthAdjust="spacingAndGlyphs">False</text>
<line x1="168.5" y1="379.48" x2="755.7" y2="379.48" stroke="#d0daef" stroke-width="0.8"/>
<text x="170.3" y="377.15999999999997" font-size="6.4" fill="#4a4f57" textLength="35.18" lengthAdjust="spacingAndGlyphs">Tacos-Lag(90)</text>
<text x="268.40000000000003" y="377.15999999999997" font-size="6.4" fill="#4a4f57" textLength="135.20" lengthAdjust="spacingAndGlyphs">{{{{Categories}Tacos}CleanMeanMissing}CleanNegati...</text>
<text x="408.2" y="377.15999999999997" font-size="6.4" fill="#4a4f57" textLength="24.77" lengthAdjust="spacingAndGlyphs">Numerical</text>
<text x="475.3" y="377.15999999999997" font-size="6.4" fill="#4a4f57" textLength="13.46" lengthAdjust="spacingAndGlyphs">False</text>
<text x="569.3" y="377.15999999999997" font-size="6.4" fill="#4a4f57" textLength="13.46" lengthAdjust="spacingAndGlyphs">False</text>
<text x="641.5" y="377.15999999999997" font-size="6.4" fill="#4a4f57" textLength="13.46" lengthAdjust="spacingAndGlyphs">False</text>
<line x1="168.5" y1="389.20000000000005" x2="755.7" y2="389.20000000000005" stroke="#d0daef" stroke-width="0.8"/>
<text x="170.3" y="386.88" font-size="6.4" fill="#4a4f57" textLength="35.18" lengthAdjust="spacingAndGlyphs">Tacos-Lag(91)</text>
<text x="268.40000000000003" y="386.88" font-size="6.4" fill="#4a4f57" textLength="135.20" lengthAdjust="spacingAndGlyphs">{{{{Categories}Tacos}CleanMeanMissing}CleanNegati...</text>
<text x="408.2" y="386.88" font-size="6.4" fill="#4a4f57" textLength="24.77" lengthAdjust="spacingAndGlyphs">Numerical</text>
<text x="475.3" y="386.88" font-size="6.4" fill="#4a4f57" textLength="13.46" lengthAdjust="spacingAndGlyphs">False</text>
<text x="569.3" y="386.88" font-size="6.4" fill="#4a4f57" textLength="13.46" lengthAdjust="spacingAndGlyphs">False</text>
<text x="641.5" y="386.88" font-size="6.4" fill="#4a4f57" textLength="13.46" lengthAdjust="spacingAndGlyphs">False</text>
</g>
<line x1="168.5" y1="233.8" x2="755.7" y2="233.8" stroke="#c0d0ee" stroke-width="0.6"/>
<line x1="168.5" y1="243.4" x2="755.7" y2="243.4" stroke="#9fb6e0" stroke-width="0.9"/>
<line x1="266.6" y1="233.8" x2="266.6" y2="387" stroke="#c5d3ee" stroke-width="0.7"/>
<line x1="406.4" y1="233.8" x2="406.4" y2="387" stroke="#c5d3ee" stroke-width="0.7"/>
<line x1="473.5" y1="233.8" x2="473.5" y2="387" stroke="#c5d3ee" stroke-width="0.7"/>
<line x1="567.5" y1="233.8" x2="567.5" y2="387" stroke="#c5d3ee" stroke-width="0.7"/>
<line x1="639.7" y1="233.8" x2="639.7" y2="387" stroke="#c5d3ee" stroke-width="0.7"/>
<rect x="168.5" y="222" width="587.2" height="165" fill="none" stroke="#a9bde3" stroke-width="0.9"/>
<rect x="35.2" y="397" width="726.5" height="16.5" fill="#213042" />
<path d="M43,407 Q43.6,404.2 45.8,404.2 Q47,404.2 48.8,407.4" stroke="#9fb2cc" stroke-width="1.3" fill="none"/>
<circle cx="47.1" cy="406.3" r="0.65" fill="#213042"/>
<line x1="47.2" y1="403.9" x2="49.5" y2="401.8" stroke="#9fb2cc" stroke-width="0.9"/>
<text x="50.8" y="408" font-size="7.4" fill="#aec3da" textLength="43.00" lengthAdjust="spacingAndGlyphs">Build Statistics</text>
<text x="106.25" y="407.3" font-size="6.1" fill="#3d86d4" textLength="31.25" lengthAdjust="spacingAndGlyphs">Health Score:</text>
<text x="139.6" y="407.3" font-size="6.1" fill="#ffffff" textLength="3.10" lengthAdjust="spacingAndGlyphs">0</text>
<text x="155.2" y="407.3" font-size="6.1" fill="#3d86d4" textLength="33.30" lengthAdjust="spacingAndGlyphs">Next Forecast:</text>
<text x="191.25" y="407.3" font-size="6.1" fill="#ffffff" textLength="56.60" lengthAdjust="spacingAndGlyphs">No Forecasts Scheduled</text>
<text x="260.2" y="407.3" font-size="6.1" fill="#3d86d4" textLength="31.90" lengthAdjust="spacingAndGlyphs">Last Forecast:</text>
<text x="295" y="407.3" font-size="6.1" fill="#ffffff" textLength="51.70" lengthAdjust="spacingAndGlyphs">6/19/2023 9:11:37 AM</text>
<text x="358.75" y="407.3" font-size="6.1" fill="#3d86d4" textLength="36.85" lengthAdjust="spacingAndGlyphs">Forecast Range:</text>
<text x="397.7" y="407.3" font-size="6.1" fill="#ffffff" textLength="19.20" lengthAdjust="spacingAndGlyphs">90 Days</text>
<text x="429.4" y="407.3" font-size="6.1" fill="#3d86d4" textLength="32.70" lengthAdjust="spacingAndGlyphs">Total Targets:</text>
<text x="464.2" y="407.3" font-size="6.1" fill="#ffffff" textLength="5.40" lengthAdjust="spacingAndGlyphs">27</text>
<text x="482.1" y="407.3" font-size="6.1" fill="#3d86d4" textLength="32.10" lengthAdjust="spacingAndGlyphs">Total Groups:</text>
<text x="515.8" y="407.3" font-size="6.1" fill="#ffffff" textLength="3.20" lengthAdjust="spacingAndGlyphs">0</text>
<rect x="715" y="399" width="42.6" height="13" fill="#3a8fd8" />
<text x="736.3" y="407.8" font-size="6" fill="#ffffff" text-anchor="middle" textLength="17.00" lengthAdjust="spacingAndGlyphs">Restart</text>
<rect x="1" y="414" width="766" height="1" fill="#e1e1e1" />
<rect x="0" y="427.4" width="768" height="1.6" fill="#ffffff" />
<rect x="1" y="415" width="766" height="12.4" fill="#2f6fb0" />
<rect x="2" y="415" width="49" height="10.7" fill="#ffffff" />
<text x="5.8" y="422.8" font-size="6.4" fill="#333333" textLength="41.70" lengthAdjust="spacingAndGlyphs">Dashboard - Sen</text>
<text x="56" y="423.2" font-size="6" fill="#c7d6ea" textLength="11.40" lengthAdjust="spacingAndGlyphs">New</text>
</svg>
</body></html>
